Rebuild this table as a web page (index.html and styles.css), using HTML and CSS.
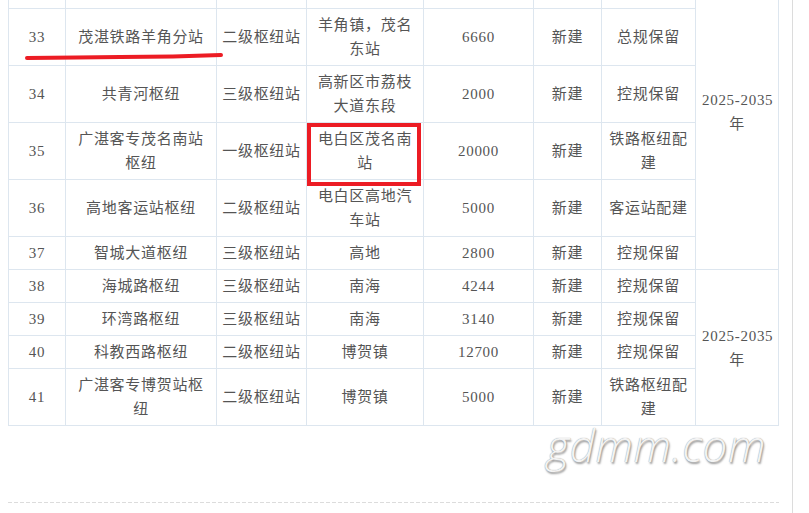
FILE: index.html
```html
<!DOCTYPE html>
<html lang="zh-CN">
<head>
    <meta charset="UTF-8">
    <meta name="viewport" content="width=device-width, initial-scale=1.0">
    <title>枢纽规划一览表</title>
    <link rel="stylesheet" href="styles.css">
</head>
<body>
    <div class="page">
        <table class="plan">
            <colgroup>
                <col class="c-no">
                <col class="c-name">
                <col class="c-level">
                <col class="c-place">
                <col class="c-area">
                <col class="c-type">
                <col class="c-note">
                <col class="c-year">
            </colgroup>
            <tbody>
                <tr class="cut">
                    <td></td><td></td><td></td><td></td><td></td><td></td><td></td>
                    <td rowspan="6"><span class="nowrap">2025-2035</span>年</td>
                </tr>
                <tr>
                    <td>33</td><td>茂湛铁路羊角分站</td><td>二级枢纽站</td><td>羊角镇，茂名东站</td><td>6660</td><td>新建</td><td>总规保留</td>
                </tr>
                <tr>
                    <td>34</td><td>共青河枢纽</td><td>三级枢纽站</td><td>高新区市荔枝大道东段</td><td>2000</td><td>新建</td><td>控规保留</td>
                </tr>
                <tr>
                    <td>35</td><td>广湛客专茂名南站枢纽</td><td>一级枢纽站</td><td>电白区茂名南站</td><td>20000</td><td>新建</td><td>铁路枢纽配建</td>
                </tr>
                <tr>
                    <td>36</td><td>高地客运站枢纽</td><td>二级枢纽站</td><td>电白区高地汽车站</td><td>5000</td><td>新建</td><td>客运站配建</td>
                </tr>
                <tr>
                    <td>37</td><td>智城大道枢纽</td><td>三级枢纽站</td><td>高地</td><td>2800</td><td>新建</td><td>控规保留</td>
                </tr>
                <tr>
                    <td>38</td><td>海城路枢纽</td><td>三级枢纽站</td><td>南海</td><td>4244</td><td>新建</td><td>控规保留</td>
                    <td rowspan="4"><span class="nowrap">2025-2035</span>年</td>
                </tr>
                <tr>
                    <td>39</td><td>环湾路枢纽</td><td>三级枢纽站</td><td>南海</td><td>3140</td><td>新建</td><td>控规保留</td>
                </tr>
                <tr>
                    <td>40</td><td>科教西路枢纽</td><td>二级枢纽站</td><td>博贺镇</td><td>12700</td><td>新建</td><td>控规保留</td>
                </tr>
                <tr>
                    <td>41</td><td>广湛客专博贺站枢纽</td><td>二级枢纽站</td><td>博贺镇</td><td>5000</td><td>新建</td><td>铁路枢纽配建</td>
                </tr>
            </tbody>
        </table>

        <div class="mark">gdmm.com</div>
        <div class="divider"></div>
        <div class="next"><span class="bullet"></span></div>

        <!-- red marks drawn over the screenshot -->
        <svg class="notes" width="809" height="513" viewBox="0 0 809 513">
            <polyline points="27,58 76,57.5 120,57 173,56.5 221,55" fill="none" stroke="#ec1c24" stroke-width="4" stroke-linecap="round" stroke-linejoin="round"/>
            <rect x="309" y="125" width="110" height="59" fill="none" stroke="#ec1c24" stroke-width="4"/>
        </svg>
    </div>
</body>
</html>
```

FILE: styles.css
```css
body {
    margin: 0;
    padding: 0;
    background: #fff;
    overflow: hidden;
}

.page {
    display: flow-root;
    position: relative;
    width: 784px;
    min-height: 513px;
    padding-left: 8px;
    border-right: 1px solid #dcdcdc;
}

.plan {
    width: 771px;
    margin-top: -47px;
    border-collapse: collapse;
    table-layout: fixed;
    font-family: "Liberation Serif", "Noto Sans CJK SC", serif;
    font-size: 15px;
    letter-spacing: 0.7px;
    color: #555;
}

.plan td {
    border: 1px solid #dde6ef;
    padding: 4px 6px;
    line-height: 24px;
    text-align: center;
    vertical-align: middle;
}

.plan td:nth-child(3) {
    padding: 4px 2px;
    white-space: nowrap;
}

.plan .cut td {
    height: 46px;
}

.c-no { width: 57px; }
.c-name { width: 151px; }
.c-level { width: 90px; }
.c-place { width: 117px; }
.c-area { width: 110px; }
.c-type { width: 68px; }
.c-note { width: 94px; }
.c-year { width: 83px; }

.nowrap {
    white-space: nowrap;
}

.mark {
    height: 76px;
    padding-right: 26px;
    text-align: right;
    font-family: "Open Sans", sans-serif;
    font-style: italic;
    font-weight: 300;
    font-size: 44px;
    line-height: 38px;
    letter-spacing: 0.5px;
    color: #f3f3f3;
    text-shadow: 0 0 1px #8a8a8a, 1px 2px 2px #9a9a9a;
}

.divider {
    width: 771px;
    height: 1px;
    background: repeating-linear-gradient(to right, #dcdcdc 0 4px, transparent 4px 6px);
}

.next {
    padding-top: 10px;
    padding-left: 3px;
}

.bullet {
    display: block;
    width: 12px;
    height: 12px;
    background: #ffa200;
    border-radius: 2px;
}

.notes {
    position: absolute;
    top: 0;
    left: 0;
    pointer-events: none;
}
```
